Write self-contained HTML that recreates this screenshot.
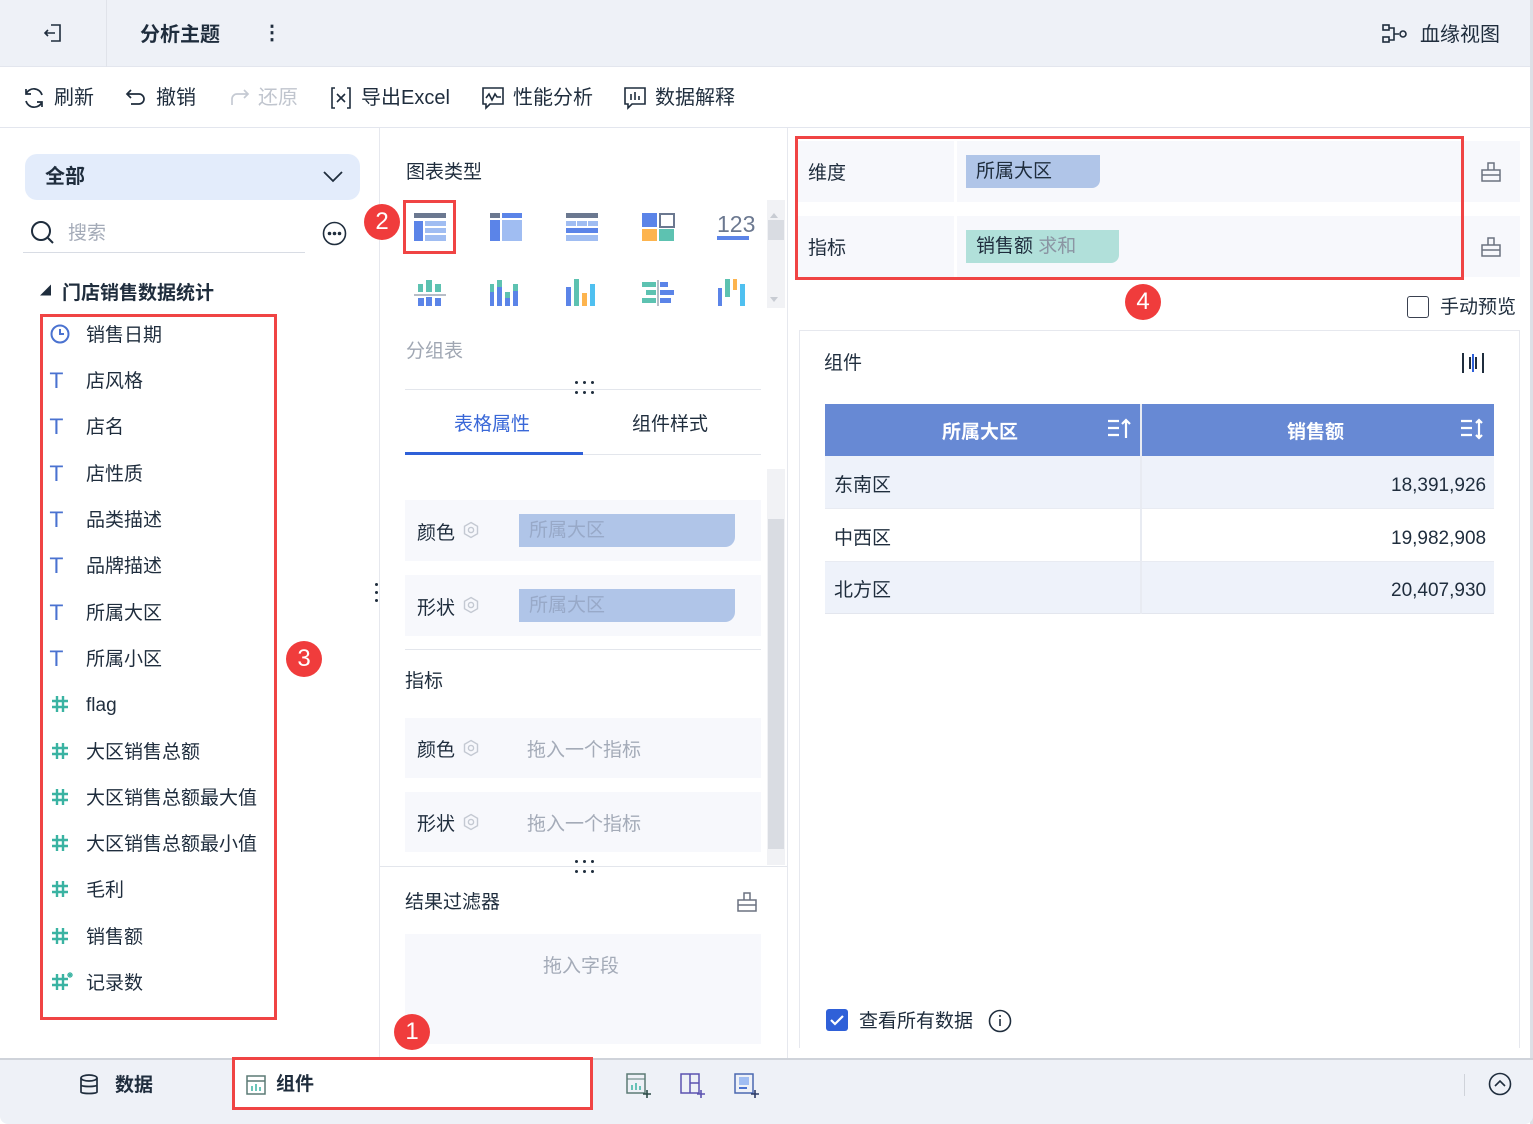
<!DOCTYPE html>
<html><head><meta charset="utf-8"><style>
*{margin:0;padding:0;box-sizing:border-box}
body{width:1533px;height:1124px;position:relative;overflow:hidden;background:#fff;font-family:"Liberation Sans","Noto Sans CJK SC",sans-serif;color:#1f2d3d;font-size:19px;line-height:1.55}
.a{position:absolute}
.red{position:absolute;border:3px solid #f04444}
.badge{position:absolute;width:36px;height:36px;border-radius:50%;background:#f03c3c;color:#fff;font-size:24px;text-align:center;line-height:36px}
.fld{position:absolute;left:50px;font-size:19px;color:#1f2d3d}
.fld i{position:absolute;left:0;top:2px;width:20px;height:24px}
.fld span{position:absolute;left:36px;white-space:nowrap}
.T{color:#4a72d0;font-style:normal;font-family:"DejaVu Sans",sans-serif;font-size:21px;line-height:24px}
.row{position:absolute;background:#f7f8fc}
</style></head><body>
<svg width="0" height="0" style="position:absolute"><defs><g id="h"><path d="M7 3v16M13 3v16M2 8h16M2 14h16" stroke="#3ab3a2" stroke-width="2.4" fill="none"/></g></defs></svg>
<!-- top bar -->
<div class="a" style="left:0;top:0;width:1533px;height:67px;background:#eef1f7;border-bottom:1px solid #e3e6ee"></div>
<div class="a" style="left:106px;top:0;width:1px;height:67px;background:#e0e3ea"></div>
<svg class="a" style="left:42px;top:22px" width="22" height="22" viewBox="0 0 22 22" fill="none" stroke="#1f2d3d" stroke-width="1.6"><path d="M9 3h9v16H9M3 11h10M6 8l-3 3 3 3"/></svg>
<div class="a" style="left:140px;top:20px;font-size:20px;font-weight:bold">分析主题</div>
<div class="a" style="left:262px;top:18px;font-size:20px;font-weight:bold">⋮</div>
<svg class="a" style="left:1382px;top:24px" width="26" height="20" viewBox="0 0 26 20" fill="none" stroke="#1f2d3d" stroke-width="1.6"><rect x="1" y="1" width="6" height="5"/><rect x="1" y="13" width="6" height="5"/><path d="M7 4h5v12H7M12 10h5"/><circle cx="21" cy="10" r="3"/></svg>
<div class="a" style="left:1420px;top:20px;font-size:20px">血缘视图</div>
<!-- toolbar -->
<div class="a" style="left:0;top:127px;width:1533px;height:1px;background:#e3e6ee"></div>
<svg class="a" style="left:22px;top:86px" width="24" height="24" viewBox="0 0 24 24" fill="none" stroke="#1f2d3d" stroke-width="1.7"><path d="M20 9A8.5 8.5 0 0 0 4 8M4 3v5h5M4 15a8.5 8.5 0 0 0 16 1M20 21v-5h-5"/></svg>
<div class="a" style="left:54px;top:83px;font-size:20px">刷新</div>
<svg class="a" style="left:125px;top:87px" width="22" height="22" viewBox="0 0 22 22" fill="none" stroke="#1f2d3d" stroke-width="1.7"><path d="M6 3L2 7l4 4M2 7h12a5 5 0 0 1 0 10H6"/></svg>
<div class="a" style="left:156px;top:83px;font-size:20px">撤销</div>
<svg class="a" style="left:228px;top:87px" width="22" height="22" viewBox="0 0 22 22" fill="none" stroke="#c5cad3" stroke-width="1.7"><path d="M16 3l4 4-4 4M20 7H9a5 5 0 0 0 -5 5v6"/></svg>
<div class="a" style="left:258px;top:83px;color:#c0c5ce;font-size:20px">还原</div>
<svg class="a" style="left:330px;top:86px" width="22" height="24" viewBox="0 0 22 24" fill="none" stroke="#1f2d3d" stroke-width="1.6"><path d="M5 2H2v20h3M17 2h3v20h-3M7 8l8 8M15 8l-8 8"/></svg>
<div class="a" style="left:361px;top:83px;font-size:20px">导出Excel</div>
<svg class="a" style="left:481px;top:86px" width="24" height="24" viewBox="0 0 24 24" fill="none" stroke="#1f2d3d" stroke-width="1.6"><path d="M2 2h20v16H9l-4 4v-4H2z"/><path d="M5 12l3-4 3 6 3-6 2 3h4"/></svg>
<div class="a" style="left:513px;top:83px;font-size:20px">性能分析</div>
<svg class="a" style="left:623px;top:86px" width="24" height="24" viewBox="0 0 24 24" fill="none" stroke="#1f2d3d" stroke-width="1.6"><path d="M2 2h20v16H9l-4 4v-4H2z"/><path d="M8 8v6M12 6v8M16 10v4"/></svg>
<div class="a" style="left:655px;top:83px;font-size:20px">数据解释</div>
<!-- column dividers -->
<div class="a" style="left:379px;top:128px;width:1px;height:930px;background:#e6e8ee"></div>
<div class="a" style="left:787px;top:128px;width:1px;height:930px;background:#e6e8ee"></div>
<div class="a" style="left:1530px;top:0;width:3px;height:1124px;background:#dde0e6"></div>
<!-- left panel -->
<div class="a" style="left:25px;top:154px;width:335px;height:46px;border-radius:12px;background:#e3ecfb"></div>
<div class="a" style="left:45px;top:162px;font-weight:bold;font-size:20px">全部</div>
<svg class="a" style="left:322px;top:170px" width="22" height="14" viewBox="0 0 22 14" fill="none" stroke="#1f2d3d" stroke-width="1.8"><path d="M2 2l9 9 9-9"/></svg>
<svg class="a" style="left:30px;top:220px" width="26" height="26" viewBox="0 0 26 26" fill="none" stroke="#1f2d3d" stroke-width="2"><circle cx="11" cy="11" r="9"/><path d="M18 18l5 5"/></svg>
<div class="a" style="left:68px;top:219px;color:#a4abb8">搜索</div>
<div class="a" style="left:23px;top:252px;width:282px;height:1px;background:#d8dce4"></div>
<svg class="a" style="left:322px;top:221px" width="25" height="25" viewBox="0 0 25 25" fill="none" stroke="#1f2d3d" stroke-width="1.6"><circle cx="12.5" cy="12.5" r="11"/><circle cx="7.5" cy="12.5" r="1" fill="#1f2d3d"/><circle cx="12.5" cy="12.5" r="1" fill="#1f2d3d"/><circle cx="17.5" cy="12.5" r="1" fill="#1f2d3d"/></svg>
<div class="a" style="left:40px;top:285px;font-size:11px;line-height:1.2">◢</div>
<div class="a" style="left:62px;top:279px;font-weight:bold;font-size:19px">门店销售数据统计</div>
<svg class="a" style="left:50px;top:324px" width="20" height="20" viewBox="0 0 20 20" fill="none" stroke="#4a72d0" stroke-width="2"><circle cx="10" cy="10" r="8.5"/><path d="M10 5v5h4"/></svg>
<div class="fld" style="top:321px"><span>销售日期</span></div>
<div class="fld" style="top:367px"><i class="T">T</i><span>店风格</span></div>
<div class="fld" style="top:413px"><i class="T">T</i><span>店名</span></div>
<div class="fld" style="top:460px"><i class="T">T</i><span>店性质</span></div>
<div class="fld" style="top:506px"><i class="T">T</i><span>品类描述</span></div>
<div class="fld" style="top:552px"><i class="T">T</i><span>品牌描述</span></div>
<div class="fld" style="top:599px"><i class="T">T</i><span>所属大区</span></div>
<div class="fld" style="top:645px"><i class="T">T</i><span>所属小区</span></div>
<div class="fld" style="top:691px"><i><svg width="20" height="24"><use href="#h"/></svg></i><span>flag</span></div>
<div class="fld" style="top:738px"><i><svg width="20" height="24"><use href="#h"/></svg></i><span>大区销售总额</span></div>
<div class="fld" style="top:784px"><i><svg width="20" height="24"><use href="#h"/></svg></i><span>大区销售总额最大值</span></div>
<div class="fld" style="top:830px"><i><svg width="20" height="24"><use href="#h"/></svg></i><span>大区销售总额最小值</span></div>
<div class="fld" style="top:876px"><i><svg width="20" height="24"><use href="#h"/></svg></i><span>毛利</span></div>
<div class="fld" style="top:923px"><i><svg width="20" height="24"><use href="#h"/></svg></i><span>销售额</span></div>
<div class="fld" style="top:969px"><i><svg width="24" height="24"><use href="#h"/><path d="M20 1v6M17 4h6M18 2l4 4M22 2l-4 4" stroke="#3ab3a2" stroke-width="1.2"/></svg></i><span>记录数</span></div>
<div class="red" style="left:40px;top:314px;width:237px;height:706px"></div>
<div class="badge" style="left:286px;top:641px">3</div>
<div class="a" style="left:375px;top:583px;width:3px;height:3px;background:#1f2d3d;border-radius:50%;box-shadow:0 8px #1f2d3d,0 16px #1f2d3d"></div>
<!-- middle -->
<div class="a" style="left:406px;top:158px">图表类型</div>
<div class="a" style="left:767px;top:200px;width:18px;height:108px;background:#f1f2f5"></div>
<div class="a" style="left:768px;top:220px;width:16px;height:20px;background:#d9dce2"></div>
<svg class="a" style="left:404px;top:200px" width="380" height="110" viewBox="0 0 380 110">
<rect x="1" y="1" width="50" height="52" fill="none" stroke="#3a62d8" stroke-width="2"/>
<rect x="10" y="13" width="32" height="5" fill="#6b7890"/><rect x="10" y="21" width="9" height="20" fill="#5b84e8"/><rect x="21" y="21" width="21" height="5" fill="#a0bdf2"/><rect x="21" y="28" width="21" height="5" fill="#a0bdf2"/><rect x="21" y="35" width="21" height="6" fill="#a0bdf2"/>
<rect x="86" y="13" width="10" height="5" fill="#6b7890"/><rect x="98" y="13" width="20" height="5" fill="#5b84e8"/><rect x="86" y="20" width="10" height="21" fill="#5b84e8"/><rect x="98" y="20" width="20" height="21" fill="#a0bdf2"/>
<rect x="162" y="13" width="32" height="5" fill="#6b7890"/><rect x="162" y="21" width="10" height="5" fill="#a0bdf2"/><rect x="173" y="21" width="10" height="5" fill="#a0bdf2"/><rect x="184" y="21" width="10" height="5" fill="#a0bdf2"/><rect x="162" y="28" width="32" height="5" fill="#5b84e8"/><rect x="162" y="35" width="32" height="6" fill="#a0bdf2"/>
<rect x="238" y="13" width="15" height="14" fill="#5b84e8"/><rect x="256" y="14" width="14" height="13" fill="none" stroke="#6b7890" stroke-width="2"/><rect x="238" y="29" width="15" height="12" fill="#fdb44e"/><rect x="255" y="29" width="15" height="12" fill="#5dc2b1"/>
<text x="313" y="32" font-size="23" fill="#6b7890" font-family="Liberation Sans">123</text><rect x="313" y="36" width="32" height="4" fill="#5b84e8"/>
<rect x="14" y="84" width="5" height="8" fill="#5dc2b1"/><rect x="22" y="80" width="6" height="12" fill="#5dc2b1"/><rect x="31" y="84" width="6" height="8" fill="#5dc2b1"/><rect x="10" y="94" width="32" height="2" fill="#b7bdc7"/><rect x="14" y="98" width="6" height="8" fill="#5b84e8"/><rect x="22" y="97" width="6" height="9" fill="#5b84e8"/><rect x="31" y="98" width="6" height="8" fill="#5b84e8"/>
<rect x="86" y="84" width="4" height="22" fill="#5b84e8"/><rect x="86" y="84" width="4" height="8" fill="#5dc2b1"/><rect x="93" y="80" width="5" height="26" fill="#5b84e8"/><rect x="93" y="80" width="5" height="7" fill="#5dc2b1"/><rect x="101" y="92" width="5" height="14" fill="#5b84e8"/><rect x="101" y="92" width="5" height="6" fill="#5dc2b1"/><rect x="109" y="84" width="5" height="22" fill="#5b84e8"/><rect x="109" y="84" width="5" height="7" fill="#5dc2b1"/>
<rect x="162" y="87" width="5" height="19" fill="#5b84e8"/><rect x="170" y="79" width="5" height="27" fill="#5dc2b1"/><rect x="178" y="93" width="5" height="13" fill="#fdb44e"/><rect x="186" y="84" width="5" height="22" fill="#4fc0f0"/>
<rect x="238" y="82" width="14" height="5" fill="#5dc2b1"/><rect x="242" y="90" width="10" height="5" fill="#5dc2b1"/><rect x="238" y="98" width="14" height="5" fill="#5dc2b1"/><rect x="253" y="80" width="2" height="26" fill="#b7bdc7"/><rect x="256" y="82" width="8" height="5" fill="#5b84e8"/><rect x="256" y="90" width="14" height="5" fill="#5b84e8"/><rect x="256" y="98" width="11" height="5" fill="#5b84e8"/>
<rect x="314" y="88" width="4" height="18" fill="#5b84e8"/><rect x="321" y="79" width="5" height="18" fill="#5dc2b1"/><rect x="329" y="79" width="4" height="11" fill="#fdb44e"/><rect x="336" y="84" width="5" height="22" fill="#4fc0f0"/>
<path d="M366 18l4-5 4 5z M366 97l4 5 4-5z" fill="#c8ccd3"/>
</svg>
<div class="red" style="left:403px;top:200px;width:53px;height:54px"></div>
<div class="badge" style="left:364px;top:204px">2</div>
<div class="a" style="left:406px;top:337px;color:#a0a7b3">分组表</div>
<div class="a" style="left:575px;top:381px;width:3px;height:3px;background:#1f2d3d;border-radius:50%;box-shadow:8px 0 #1f2d3d,16px 0 #1f2d3d,0 10px #1f2d3d,8px 10px #1f2d3d,16px 10px #1f2d3d"></div>
<div class="a" style="left:405px;top:389px;width:356px;height:1px;background:#e3e6ec"></div>
<div class="a" style="left:454px;top:410px;color:#3a68d8">表格属性</div>
<div class="a" style="left:632px;top:410px">组件样式</div>
<div class="a" style="left:405px;top:454px;width:356px;height:1px;background:#e3e6ec"></div>
<div class="a" style="left:405px;top:452px;width:178px;height:3px;background:#2f60d8"></div>
<div class="a" style="left:767px;top:469px;width:18px;height:396px;background:#f1f2f5"></div>
<div class="a" style="left:768px;top:519px;width:16px;height:330px;background:#d9dce2"></div>
<div class="row" style="left:405px;top:500px;width:356px;height:61px"></div>
<div class="a" style="left:417px;top:519px">颜色</div>
<svg class="a" style="left:462px;top:521px" width="18" height="18" viewBox="0 0 18 18" fill="none" stroke="#c4c9d2" stroke-width="1.4"><path d="M9 1.5l6.5 3.75v7.5L9 16.5l-6.5-3.75v-7.5z"/><circle cx="9" cy="9" r="2.6"/></svg>
<div class="a" style="left:519px;top:514px;width:216px;height:33px;background:#b0c5e8;border-radius:0 0 10px 0;color:#98a9c8;padding:4px 10px;line-height:1.33">所属大区</div>
<div class="row" style="left:405px;top:575px;width:356px;height:61px"></div>
<div class="a" style="left:417px;top:594px">形状</div>
<svg class="a" style="left:462px;top:596px" width="18" height="18" viewBox="0 0 18 18" fill="none" stroke="#c4c9d2" stroke-width="1.4"><path d="M9 1.5l6.5 3.75v7.5L9 16.5l-6.5-3.75v-7.5z"/><circle cx="9" cy="9" r="2.6"/></svg>
<div class="a" style="left:519px;top:589px;width:216px;height:33px;background:#b0c5e8;border-radius:0 0 10px 0;color:#98a9c8;padding:4px 10px;line-height:1.33">所属大区</div>
<div class="a" style="left:405px;top:649px;width:356px;height:1px;background:#e3e6ec"></div>
<div class="a" style="left:405px;top:667px">指标</div>
<div class="row" style="left:405px;top:718px;width:356px;height:60px"></div>
<div class="a" style="left:417px;top:736px">颜色</div>
<svg class="a" style="left:462px;top:739px" width="18" height="18" viewBox="0 0 18 18" fill="none" stroke="#c4c9d2" stroke-width="1.4"><path d="M9 1.5l6.5 3.75v7.5L9 16.5l-6.5-3.75v-7.5z"/><circle cx="9" cy="9" r="2.6"/></svg>
<div class="a" style="left:527px;top:736px;color:#a4abb8">拖入一个指标</div>
<div class="row" style="left:405px;top:792px;width:356px;height:60px"></div>
<div class="a" style="left:417px;top:810px">形状</div>
<svg class="a" style="left:462px;top:813px" width="18" height="18" viewBox="0 0 18 18" fill="none" stroke="#c4c9d2" stroke-width="1.4"><path d="M9 1.5l6.5 3.75v7.5L9 16.5l-6.5-3.75v-7.5z"/><circle cx="9" cy="9" r="2.6"/></svg>
<div class="a" style="left:527px;top:810px;color:#a4abb8">拖入一个指标</div>
<div class="a" style="left:575px;top:860px;width:3px;height:3px;background:#1f2d3d;border-radius:50%;box-shadow:8px 0 #1f2d3d,16px 0 #1f2d3d,0 10px #1f2d3d,8px 10px #1f2d3d,16px 10px #1f2d3d"></div>
<div class="a" style="left:380px;top:866px;width:407px;height:1px;background:#e3e6ec"></div>
<div class="a" style="left:405px;top:888px">结果过滤器</div>
<svg class="a" style="left:736px;top:891px" width="22" height="22" viewBox="0 0 22 22" fill="none" stroke="#6b7280" stroke-width="1.5"><path d="M2 9h18v11H2zM8 9V2h6v7M2 14h18"/></svg>
<div class="row" style="left:405px;top:934px;width:356px;height:110px"></div>
<div class="a" style="left:543px;top:952px;color:#a4abb8">拖入字段</div>
<div class="badge" style="left:394px;top:1014px">1</div>
<!-- right -->
<div class="row" style="left:797px;top:141px;width:723px;height:61px"></div>
<div class="a" style="left:954px;top:141px;width:3px;height:61px;background:#fff"></div>
<div class="a" style="left:808px;top:159px">维度</div>
<div class="a" style="left:966px;top:155px;width:134px;height:33px;background:#b0c5e8;border-radius:0 0 8px 0;padding:4px 10px;line-height:1.33">所属大区</div>
<svg class="a" style="left:1480px;top:161px" width="22" height="22" viewBox="0 0 22 22" fill="none" stroke="#6b7280" stroke-width="1.5"><path d="M2 9h18v11H2zM8 9V2h6v7M2 14h18"/></svg>
<div class="row" style="left:797px;top:216px;width:723px;height:61px"></div>
<div class="a" style="left:954px;top:216px;width:3px;height:61px;background:#fff"></div>
<div class="a" style="left:808px;top:234px">指标</div>
<div class="a" style="left:966px;top:230px;width:153px;height:33px;background:#b1e0da;border-radius:0 0 8px 0;padding:4px 10px;line-height:1.33">销售额 <span style="color:#8b95a3">求和</span></div>
<svg class="a" style="left:1480px;top:236px" width="22" height="22" viewBox="0 0 22 22" fill="none" stroke="#6b7280" stroke-width="1.5"><path d="M2 9h18v11H2zM8 9V2h6v7M2 14h18"/></svg>
<div class="red" style="left:795px;top:136px;width:669px;height:144px"></div>
<div class="badge" style="left:1125px;top:284px">4</div>
<div class="a" style="left:1407px;top:296px;width:22px;height:22px;border:1.5px solid #3a4150;border-radius:3px"></div>
<div class="a" style="left:1440px;top:293px">手动预览</div>
<div class="a" style="left:799px;top:330px;width:721px;height:718px;border:1px solid #e6e8ee;border-bottom:none"></div>
<div class="a" style="left:824px;top:349px">组件</div>
<svg class="a" style="left:1462px;top:352px" width="22" height="22" viewBox="0 0 22 22" stroke="#1f2d3d" stroke-width="2"><path d="M1 1v20M21 1v20M8 5v12M14 5v12"/><path d="M11 2v18" stroke="#2f60d8"/></svg>
<div class="a" style="left:825px;top:404px;width:669px;height:52px;background:#6789d4"></div>
<div class="a" style="left:942px;top:418px;color:#fff;font-weight:bold">所属大区</div>
<svg class="a" style="left:1107px;top:418px" width="24" height="22" viewBox="0 0 24 22" stroke="#fff" stroke-width="2.2" fill="none"><path d="M1 3h11M1 10h11M1 17h11M19 20V2M15 6l4-4 4 4"/></svg>
<div class="a" style="left:1287px;top:418px;color:#fff;font-weight:bold">销售额</div>
<svg class="a" style="left:1460px;top:418px" width="24" height="22" viewBox="0 0 24 22" stroke="#fff" stroke-width="2.2" fill="none"><path d="M1 3h11M1 10h11M1 17h11M19 2v18M16 5l3-3 3 3M16 17l3 3 3-3"/></svg>
<div class="a" style="left:825px;top:456px;width:669px;height:53px;background:#eef2fa;border-bottom:1px solid #e8ebf2"></div>
<div class="a" style="left:825px;top:509px;width:669px;height:53px;background:#fff;border-bottom:1px solid #e8ebf2"></div>
<div class="a" style="left:825px;top:562px;width:669px;height:52px;background:#eef2fa;border-bottom:1px solid #e3e6ee"></div>
<div class="a" style="left:1140px;top:404px;width:2px;height:210px;background:#e8ebf2"></div>
<div class="a" style="left:834px;top:471px">东南区</div><div class="a" style="left:1391px;top:471px">18,391,926</div>
<div class="a" style="left:834px;top:524px">中西区</div><div class="a" style="left:1391px;top:524px">19,982,908</div>
<div class="a" style="left:834px;top:576px">北方区</div><div class="a" style="left:1391px;top:576px">20,407,930</div>
<div class="a" style="left:826px;top:1009px;width:22px;height:22px;background:#2f60d8;border-radius:3px"></div>
<svg class="a" style="left:826px;top:1009px" width="22" height="22"><path d="M5 11l4 4 8-8" stroke="#fff" stroke-width="2.2" fill="none"/></svg>
<div class="a" style="left:859px;top:1007px">查看所有数据</div>
<svg class="a" style="left:988px;top:1009px" width="24" height="24" viewBox="0 0 24 24" fill="none" stroke="#1f2d3d" stroke-width="1.6"><circle cx="12" cy="12" r="10.5"/><path d="M12 10v7M12 6v2"/></svg>
<!-- bottom -->
<div class="a" style="left:0;top:1058px;width:1533px;height:66px;background:#eef1f7;border-top:2px solid #cfd3da;border-radius:0 0 8px 8px"></div>
<svg class="a" style="left:79px;top:1074px" width="20" height="22" viewBox="0 0 20 22" fill="none" stroke="#1f2d3d" stroke-width="1.7"><ellipse cx="10" cy="4" rx="8" ry="3"/><path d="M2 4v14c0 2 16 2 16 0V4M2 11c0 2 16 2 16 0"/></svg>
<div class="a" style="left:115px;top:1071px;font-weight:bold">数据</div>
<div class="a" style="left:235px;top:1059px;width:356px;height:49px;background:#fff"></div>
<svg class="a" style="left:246px;top:1075px" width="20" height="20" viewBox="0 0 20 20" fill="none"><rect x="1" y="1" width="18" height="18" stroke="#5b7a75" stroke-width="1.5"/><path d="M1 6h18" stroke="#5b7a75" stroke-width="1.5"/><path d="M6 16v-5M10 16v-7M14 16v-4" stroke="#3ab3a2" stroke-width="1.5"/></svg>
<div class="a" style="left:276px;top:1070px;font-weight:bold">组件</div>
<div class="red" style="left:232px;top:1057px;width:361px;height:53px"></div>
<svg class="a" style="left:626px;top:1073px" width="26" height="26" viewBox="0 0 26 26" fill="none"><rect x="1" y="1" width="18" height="19" stroke="#5b7a75" stroke-width="1.5"/><path d="M1 6h18" stroke="#5b7a75"/><path d="M6 17v-5M10 17v-7M14 17v-4" stroke="#3ab3a2" stroke-width="1.5"/><path d="M21 17v8M17 21h8" stroke="#2b4a46" stroke-width="1.6"/></svg>
<svg class="a" style="left:680px;top:1073px" width="26" height="26" viewBox="0 0 26 26" fill="none" stroke="#5b52b0" stroke-width="1.5"><rect x="1" y="1" width="18" height="19"/><path d="M10 1v19M10 10h9"/><path d="M21 17v8M17 21h8" stroke-width="1.6"/></svg>
<svg class="a" style="left:734px;top:1073px" width="26" height="26" viewBox="0 0 26 26" fill="none"><rect x="1" y="1" width="18" height="19" stroke="#4a68b0" stroke-width="1.5"/><rect x="5" y="4" width="10" height="8" fill="#a0bdf2"/><path d="M5 15h8" stroke="#4a72d0" stroke-width="2"/><path d="M21 17v8M17 21h8" stroke="#2b3a66" stroke-width="1.6"/></svg>
<div class="a" style="left:1464px;top:1074px;width:1px;height:22px;background:#cfd3da"></div>
<svg class="a" style="left:1488px;top:1072px" width="24" height="24" viewBox="0 0 24 24" fill="none" stroke="#1f2d3d" stroke-width="1.6"><circle cx="12" cy="12" r="10.5"/><path d="M7 14l5-5 5 5"/></svg>
</body></html>
